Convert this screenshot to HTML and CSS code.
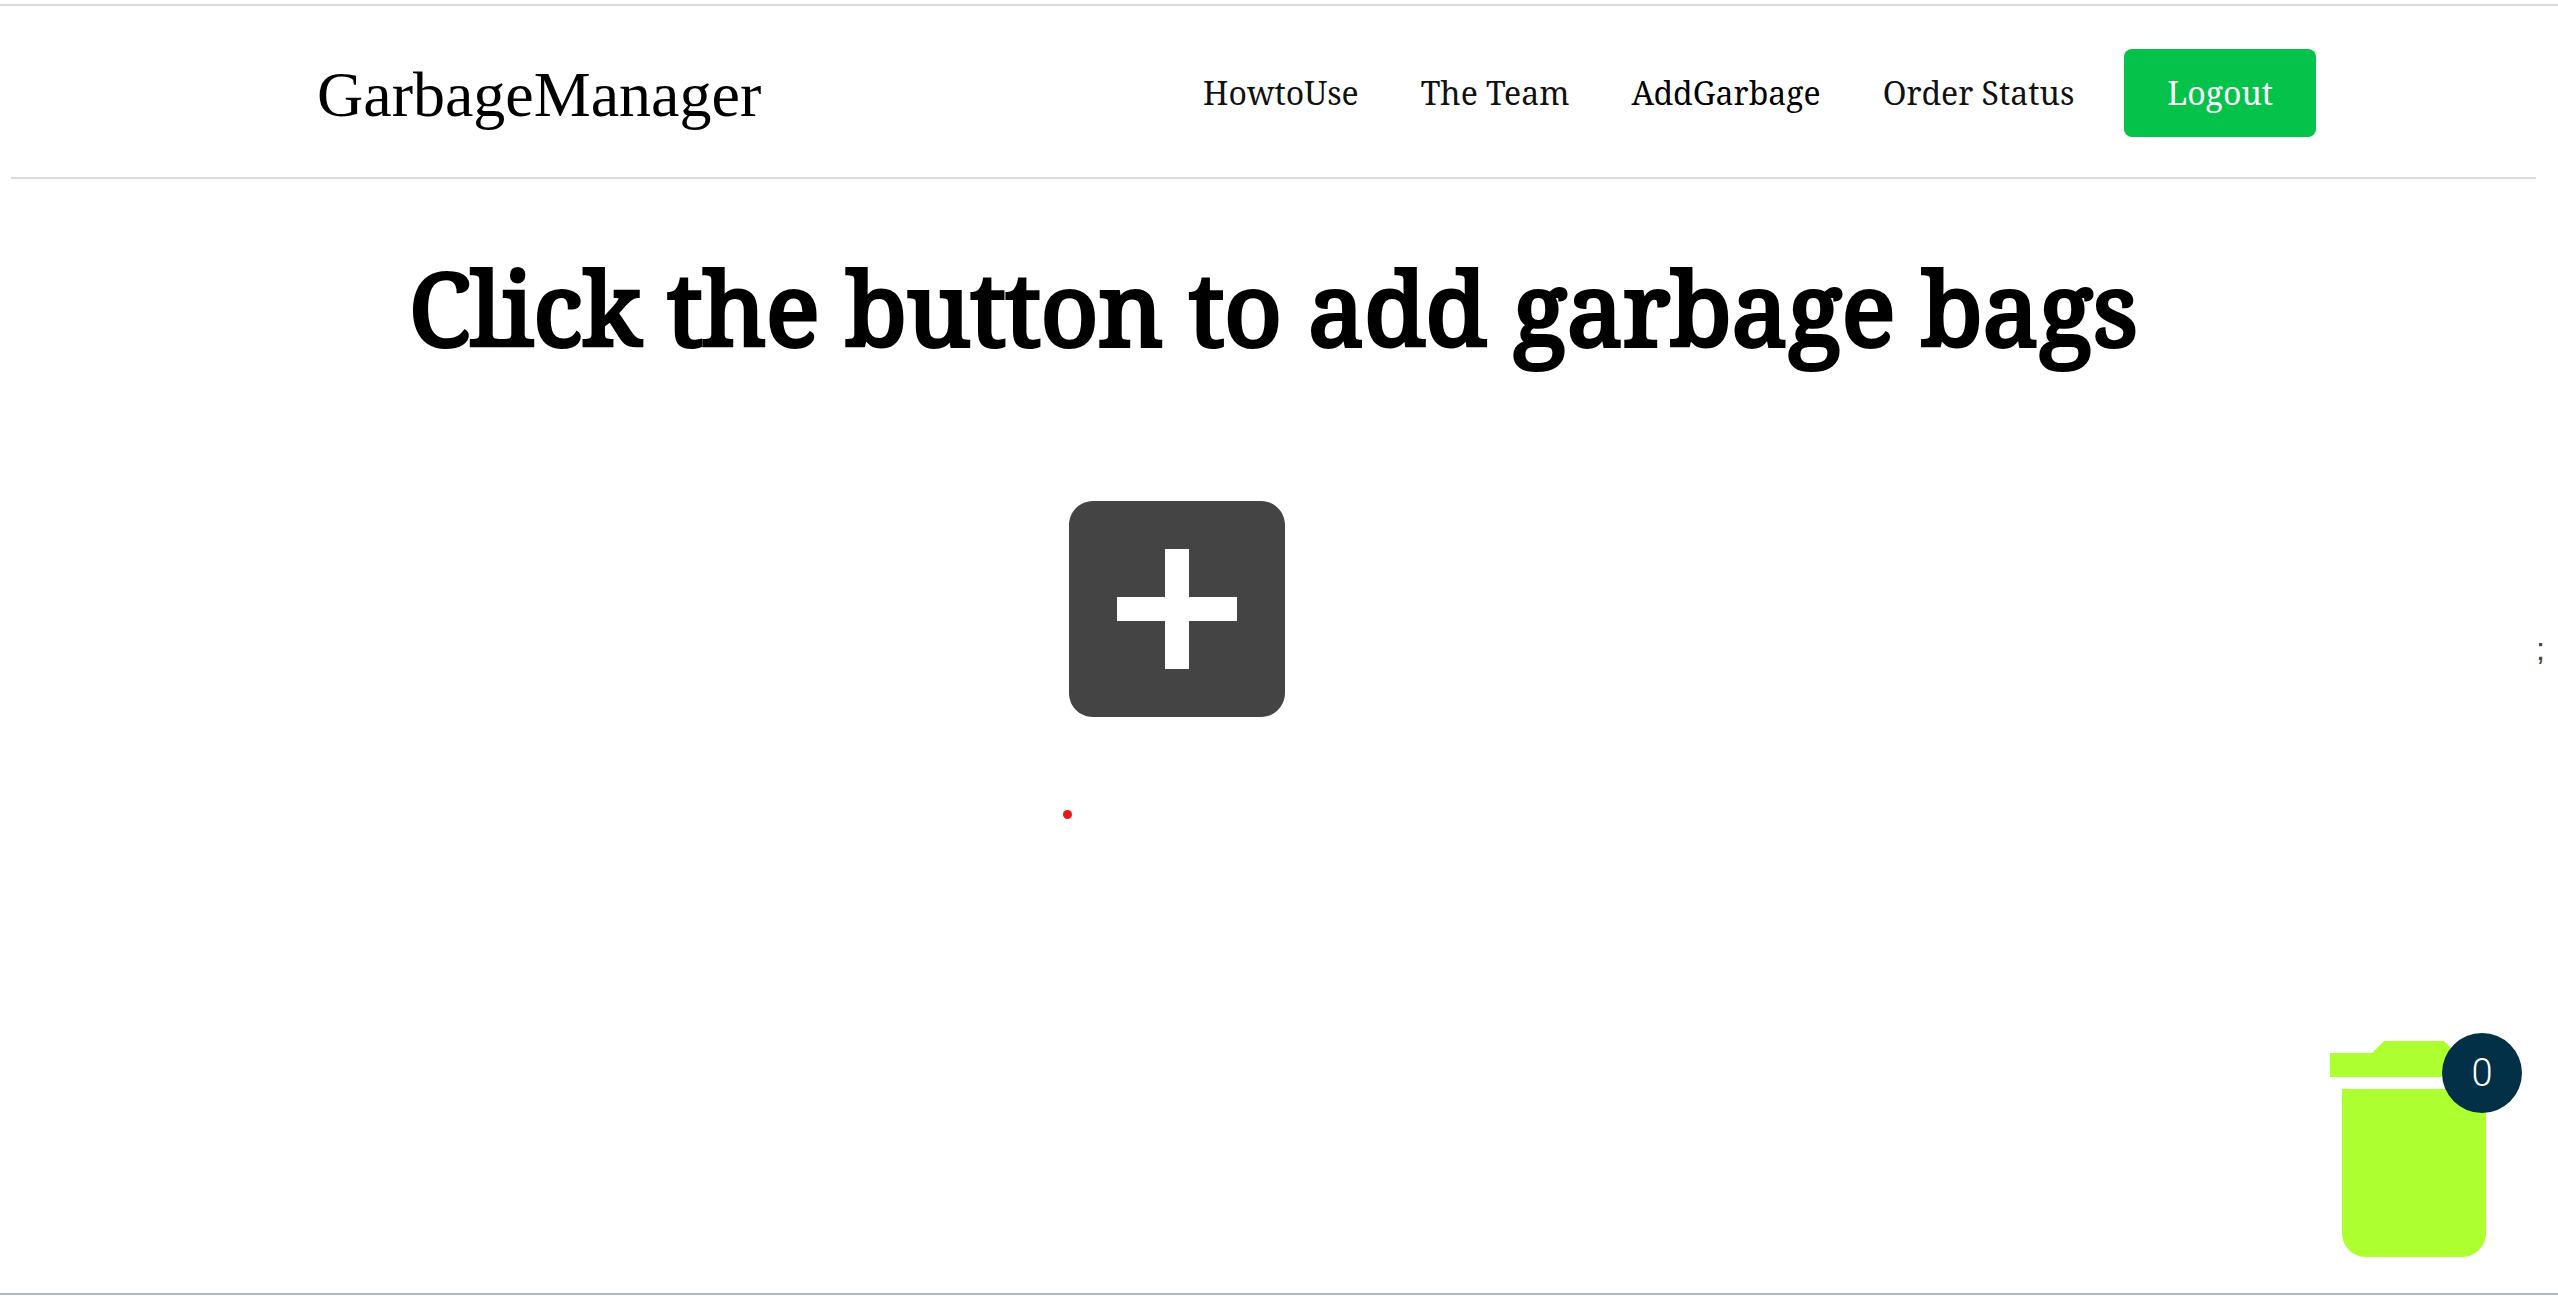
FILE: index.html
```html
<!DOCTYPE html>
<html lang="en">
<head>
<meta charset="utf-8">
<title>GarbageManager</title>
<link rel="stylesheet" href="styles.css">
</head>
<body>
<header class="header">
  <a class="logo" href="#">GarbageManager</a>
  <nav class="nav">
    <a class="nav-link" href="#">HowtoUse</a>
    <a class="nav-link" href="#">The Team</a>
    <a class="nav-link nav-link-active" href="#">AddGarbage</a>
    <a class="nav-link" href="#">Order Status</a>
    <button class="logout" type="button">Logout</button>
  </nav>
</header>
<main class="main">
  <h1 class="title">Click the button to add garbage bags</h1>
  <div class="add-row">
    <button class="add" type="button" aria-label="Add garbage bag">
      <svg class="icon" viewBox="0 0 24 24" fill="currentColor"><path d="M19 3H5c-1.11 0-2 .9-2 2v14c0 1.1.89 2 2 2h14c1.1 0 2-.9 2-2V5c0-1.1-.9-2-2-2zm-2 10h-4v4h-2v-4H7v-2h4V7h2v4h4v2z"/></svg>
    </button>
    <span class="mark">;</span>
  </div>
  <div class="dot"></div>
</main>
<button class="bin" type="button" aria-label="Garbage bags">
  <svg class="icon" viewBox="0 0 24 24" fill="currentColor"><path d="M6 19c0 1.1.9 2 2 2h8c1.1 0 2-.9 2-2V7H6v12zM19 4h-3.5l-1-1h-5l-1 1H5v2h14V4z"/></svg>
  <span class="badge">0</span>
</button>
</body>
</html>
```
FILE: styles.css
```css
* {
  box-sizing: border-box;
}

body {
  display: flex;
  flex-direction: column;
  min-height: 100vh;
  margin: 0;
  padding-top: 4px;
  background: #fff;
  border-bottom: 1px solid #fff;
  box-shadow: inset 0 -2px #b0b6be;
  font-family: "Noto Serif", "Droid Serif", "DejaVu Serif", serif;
  color: #000;
}

body::before {
  content: "";
  height: 2px;
  background: #dadada;
}

button {
  padding: 0;
  border: 0;
  background: none;
  font: inherit;
  cursor: pointer;
}

.header {
  display: flex;
  align-items: center;
  justify-content: space-between;
  height: 173px;
  margin: 0 22px 0 11px;
  padding: 3px 220px 0 306px;
  border-bottom: 2px solid #dadada;
}

.logo {
  padding-top: 4px;
  font: 64px/76px "Liberation Serif", serif;
  color: #000;
  text-decoration: none;
}

.nav {
  display: flex;
  align-items: center;
  gap: 62px;
}

.nav-link {
  font-size: 32px;
  line-height: 44px;
  color: #111;
  text-decoration: none;
}

.nav-link-active {
  color: #000;
}

.logout {
  height: 88px;
  margin-left: -12px;
  padding: 0 43px;
  border-radius: 8px;
  background: #05c24a;
  font-size: 32px;
  line-height: 44px;
  color: #fff;
}

.main {
  flex: 1;
}

.title {
  margin: 60px 22px 0 11px;
  font-size: 100px;
  line-height: 136px;
  font-weight: 400;
  text-align: center;
  -webkit-text-stroke: 4px #000;
}

.add-row {
  display: flex;
  align-items: center;
  justify-content: space-between;
  margin-top: 90px;
  padding: 0 13px 0 calc(50% - 246px);
}

.add,
.bin {
  width: 288px;
  height: 288px;
  color: #444;
}

.icon {
  display: block;
  width: 100%;
  height: 100%;
}

.mark {
  margin-top: 80px;
  font: 32px/40px "Liberation Sans", sans-serif;
  color: #444;
}

.dot {
  width: 9px;
  height: 9px;
  margin: 57px 0 0 calc(50% - 216px);
  border-radius: 50%;
  background: #e81818;
}

.bin {
  position: fixed;
  right: 0;
  bottom: 3px;
  color: #adff2f;
}

.badge {
  position: absolute;
  top: 28px;
  right: 36px;
  width: 80px;
  border-radius: 50%;
  background: #023047;
  font: 300 38px/80px Roboto, sans-serif;
  color: #fff;
}
```
